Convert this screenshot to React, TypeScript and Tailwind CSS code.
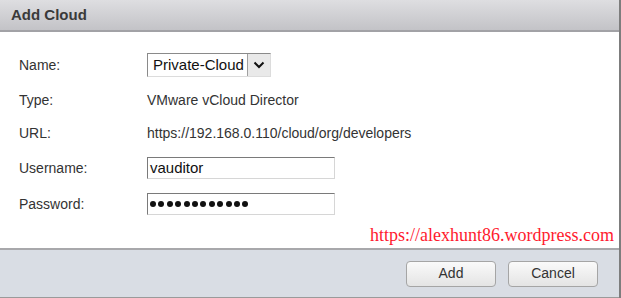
export default function App() {
  const rows = [
    { label: "Type:", value: "VMware vCloud Director" },
    { label: "URL:", value: "https://192.168.0.110/cloud/org/developers" },
  ];

  return (
    <div className="w-[621px] h-[298px] flex flex-col bg-white border-r-2 border-[#7d7d7d] font-['Liberation_Sans',Arial,sans-serif] text-[14px] text-[#333]">
      <div className="h-[32px] shrink-0 flex items-center px-[11px] bg-gradient-to-b from-[#dedee1] to-[#c3c3c7] border-b-2 border-[#a2a2a6]">
        <span className="font-bold text-[15px] text-[#3a3a3a]">Add Cloud</span>
      </div>

      <div className="flex-1 flex flex-col pl-[19px] pt-[21px] relative">
        <div className="flex items-center h-[24px]">
          <span className="w-[128px]">Name:</span>
          <div className="flex items-stretch h-[24px] border border-[#8a8a8a] border-b-[#dcdcdc] border-r-[#dcdcdc] bg-white">
            <span className="pl-[5px] pr-[3px] text-[15px] leading-[22px] text-[#111]">Private-Cloud</span>
            <span className="w-[23px] flex items-center justify-center bg-[#e9e9e9] border-l border-[#a0a0a0]">
              <svg width="12" height="8" viewBox="0 0 12 8">
                <path d="M1.5 1.5 L6 6 L10.5 1.5" fill="none" stroke="#111" strokeWidth="2" />
              </svg>
            </span>
          </div>
        </div>

        {rows.map((r) => (
          <div key={r.label} className="flex items-center h-[20px] mt-[13px]">
            <span className="w-[128px]">{r.label}</span>
            <span>{r.value}</span>
          </div>
        ))}

        <div className="flex items-center h-[22px] mt-[14px]">
          <span className="w-[128px]">Username:</span>
          <div className="w-[188px] h-[22px] border border-[#7a7a7a] border-b-[#d6d6d6] border-r-[#d6d6d6] px-[2px] leading-[20px] text-[15px] text-[#111]">
            vauditor
          </div>
        </div>

        <div className="flex items-center h-[22px] mt-[14px]">
          <span className="w-[128px]">Password:</span>
          <div className="w-[188px] h-[22px] border border-[#7a7a7a] border-b-[#d6d6d6] border-r-[#d6d6d6] px-[2px] flex items-center gap-[2.4px]">
            {Array.from({ length: 12 }).map((_, i) => (
              <span key={i} className="w-[6px] h-[6px] rounded-full bg-[#111]" />
            ))}
          </div>
        </div>

        <span className="absolute right-[5px] bottom-[-1px] font-['Liberation_Serif','Times_New_Roman',serif] text-[18px] text-[#ff1a2e]">
          https://alexhunt86.wordpress.com
        </span>
      </div>

      <div className="h-[50px] shrink-0 bg-[#d9dde4] border-t-2 border-[#a8a8ab] border-b border-b-[#9a9a9a] flex items-center justify-end gap-[12px] pr-[21px]">
        <button className="w-[90px] h-[26px] rounded-[4px] border border-[#a5a5a5] bg-gradient-to-b from-[#fafafa] to-[#e4e4e4] text-[14px] text-[#333]">
          Add
        </button>
        <button className="w-[90px] h-[26px] rounded-[4px] border border-[#a5a5a5] bg-gradient-to-b from-[#fafafa] to-[#e4e4e4] text-[14px] text-[#333]">
          Cancel
        </button>
      </div>
    </div>
  );
}
